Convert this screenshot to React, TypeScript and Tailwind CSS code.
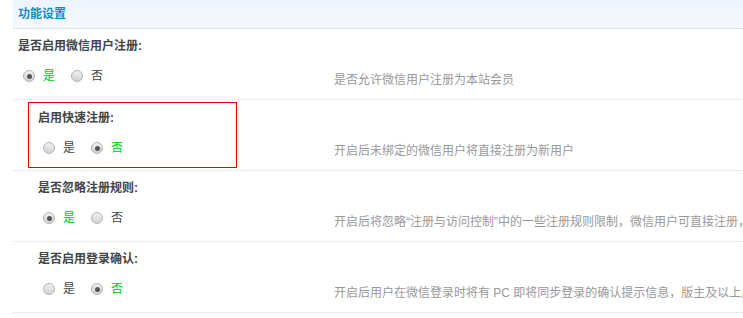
const font = "font-['Liberation_Sans','Noto_Sans_CJK_SC',sans-serif]";

type Setting = {
  label: string;
  value: boolean;
  tip: string;
  indent?: boolean;
  highlight?: boolean;
};

const SETTINGS: Setting[] = [
  { label: '是否启用微信用户注册:', value: true, tip: '是否允许微信用户注册为本站会员' },
  { label: '启用快速注册:', value: false, tip: '开启后未绑定的微信用户将直接注册为新用户', indent: true, highlight: true },
  {
    label: '是否忽略注册规则:',
    value: true,
    tip: '开启后将忽略“注册与访问控制”中的一些注册规则限制，微信用户可直接注册，无需填写任何资料',
    indent: true,
  },
  {
    label: '是否启用登录确认:',
    value: false,
    tip: '开启后用户在微信登录时将有 PC 即将同步登录的确认提示信息，版主及以上用户强制开启',
    indent: true,
  },
];

// Old-style grey radio button
function Radio({ checked, text }: { checked: boolean; text: string }) {
  return (
    <label className="mr-[16px] flex items-center gap-[8px]">
      <span className="flex h-[12px] w-[12px] items-center justify-center rounded-full border border-[#b4b4b4] bg-gradient-to-b from-[#f0f0f0] to-[#d2d2d2]">
        {checked && <span className="h-[5px] w-[5px] rounded-full bg-[#555]" />}
      </span>
      <span className={checked ? 'text-[#00c800]' : 'text-[#444]'}>{text}</span>
    </label>
  );
}

function SettingBody({ s }: { s: Setting }) {
  return (
    <>
      <div className="h-[16px] leading-[16px] font-bold text-[#444]">{s.label}</div>
      <div className="mt-[14px] flex h-[16px] items-center pl-[5px] leading-[16px]">
        <Radio checked={s.value} text="是" />
        <Radio checked={!s.value} text="否" />
      </div>
    </>
  );
}

export default function App() {
  return (
    <div className={`h-[318px] w-[743px] overflow-hidden bg-white text-[12px] ${font}`}>
      {/* Section title */}
      <div className="ml-[13px] flex h-[29px] items-center border-b border-dotted border-[#c9d7e3] bg-gradient-to-b from-[#ecf4fd] to-[#f5f9fe] pl-[5px]">
        <span className="font-bold text-[#1089c8]">功能设置</span>
      </div>

      {SETTINGS.map((s) => (
        <div
          key={s.label}
          className="ml-[13px] flex h-[71px] border-b border-dotted border-[#d3dee8]"
        >
          {s.highlight ? (
            <div className="w-[321px] shrink-0 pl-[15px] pt-[2px]">
              <div className="h-[66px] w-[209px] border border-[#e50000] pl-[9px] pt-[7px]">
                <SettingBody s={s} />
              </div>
            </div>
          ) : (
            <div className={`w-[321px] shrink-0 pt-[9px] ${s.indent ? 'pl-[25px]' : 'pl-[5px]'}`}>
              <SettingBody s={s} />
            </div>
          )}
          <div className="whitespace-nowrap pt-[43px] leading-[16px] text-[#999]">{s.tip}</div>
        </div>
      ))}
    </div>
  );
}
